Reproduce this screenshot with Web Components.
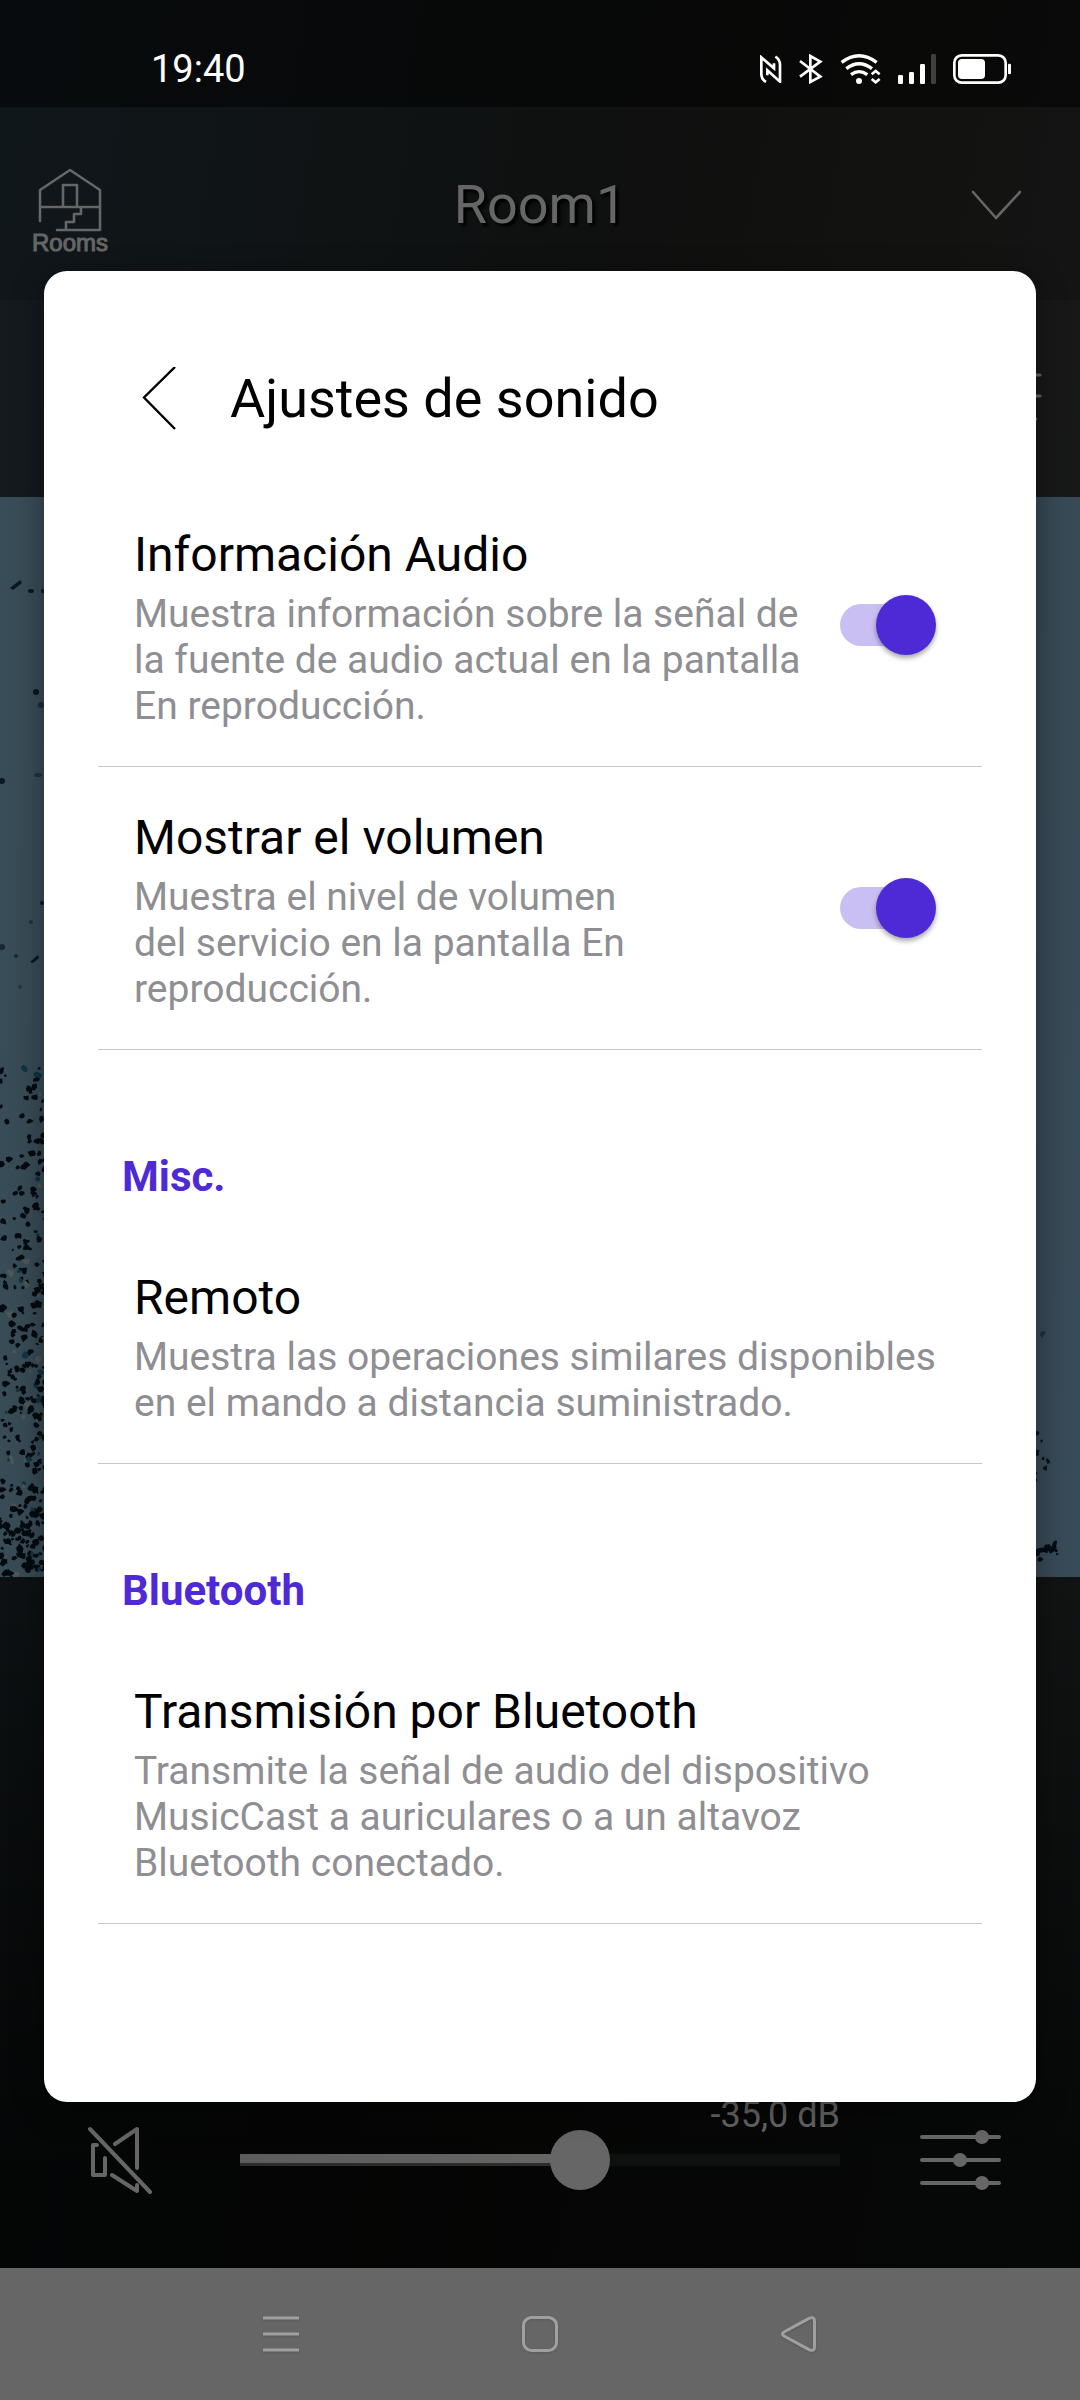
<!DOCTYPE html>
<html lang="es">
<head>
<meta charset="utf-8">
<meta name="viewport" content="width=device-width, initial-scale=1">
<title>Ajustes de sonido</title>
<style>
  body {
    margin: 0;
    background: #040506;
    font-family: Roboto, "Liberation Sans", sans-serif;
  }
</style>
</head>
<body>
<sound-settings-page></sound-settings-page>

<script>
customElements.define(
  "status-bar",
  class extends HTMLElement {
    constructor() {
      super();
      this.attachShadow({ mode: "open" }).innerHTML = `
        <style>
          :host {
            display: flex;
            align-items: center;
            justify-content: space-between;
            box-sizing: border-box;
            height: 107px;
            padding: 30px 69px 0 151px;
            background: rgba(0, 0, 0, 0.5);
            color: #fff;
            font-size: 38px;
          }
          .icons {
            display: flex;
            align-items: center;
            gap: 17px;
          }
          svg { display: block; fill: none; stroke: #fff; }
          .solid { fill: #fff; stroke: none; }
        </style>
        <time>19:40</time>
        <div class="icons">
          <svg width="22" height="28" viewBox="180 165 66 84" stroke-width="8">
            <path d="M198 246C188 240 184 235 184 222V172L222 205V190M226 170C236 176 240 182 240 194V245L202 211V226"/>
          </svg>
          <svg width="24" height="30" viewBox="297 162 72 90" stroke-width="8">
            <path d="M300 183L361 230L331 246V168L361 185L300 230"/>
          </svg>
          <svg width="41" height="31" viewBox="423 156 123 93">
            <path stroke-width="10" d="M428 184Q480 144 533 184M442 203Q480 173 519 203M456 221Q480 203 505 221"/>
            <circle class="solid" cx="480" cy="240" r="9"/>
            <path stroke-width="8" d="M518 220L530 210L542 220M518 234L530 244L542 234"/>
          </svg>
          <svg width="38" height="30" viewBox="591 159 114 90">
            <g class="solid">
              <rect x="591" y="222" width="15" height="27" rx="4"/>
              <rect x="624" y="213" width="15" height="36" rx="4"/>
              <rect x="657" y="189" width="15" height="60" rx="4"/>
              <rect x="690" y="159" width="15" height="90" rx="4" opacity="0.22"/>
            </g>
          </svg>
          <svg width="58" height="30" viewBox="759 159 174 90">
            <rect x="763" y="163" width="154" height="82" rx="22" stroke-width="8"/>
            <rect class="solid" x="774" y="174" width="81" height="60" rx="12"/>
            <rect class="solid" x="924" y="188" width="9" height="32" rx="4"/>
          </svg>
        </div>`;
    }
  }
);

customElements.define(
  "room-header",
  class extends HTMLElement {
    constructor() {
      super();
      this.attachShadow({ mode: "open" }).innerHTML = `
        <style>
          :host {
            display: grid;
            grid-template-columns: 1fr auto 1fr;
            align-items: center;
            box-sizing: border-box;
            height: 193px;
            padding: 2px 32px 0;
            color: #666;
          }
          button {
            padding: 0;
            border: 0;
            background: none;
            color: inherit;
          }
          h1 {
            margin: 0;
            font-size: 54px;
            font-weight: 400;
            line-height: 64px;
            text-shadow: 3px 3px 3px #000;
          }
          .rooms {
            justify-self: start;
            padding-top: 12px;
            font-family: "Liberation Sans", Arial, sans-serif;
            font-size: 24px;
            line-height: 20px;
            -webkit-text-stroke: 1px #666;
          }
          .more { justify-self: end; margin-right: 27px; }
          svg {
            display: block;
            margin: 0 auto;
            fill: none;
            stroke: currentColor;
            stroke-width: 2.6;
            stroke-linecap: round;
            stroke-linejoin: round;
          }
        </style>
        <button class="rooms">
          <svg width="64" height="65" viewBox="40 169 64 65">
            <path d="M42 222V191L72 171L102 191V231H59M42 208H102M65 208V186H79V208M83 208V215H76V223H68V231"/>
          </svg>
          Rooms
        </button>
        <h1><slot></slot></h1>
        <button class="more" aria-label="Cambiar de sala">
          <svg width="50" height="30" viewBox="0 0 50 30"><path d="M2 2L25 28L49 2"/></svg>
        </button>`;
    }
  }
);

customElements.define(
  "player-toolbar",
  class extends HTMLElement {
    constructor() {
      super();
      this.attachShadow({ mode: "open" }).innerHTML = `
        <style>
          :host {
            display: flex;
            align-items: center;
            justify-content: flex-end;
            box-sizing: border-box;
            height: 197px;
            padding: 0 38px;
            background: rgba(255, 255, 255, 0.02);
            color: #666;
          }
          button { padding: 0; border: 0; background: none; color: inherit; }
          svg { display: block; fill: none; stroke: currentColor; stroke-width: 3; stroke-linecap: round; }
        </style>
        <button aria-label="Lista">
          <svg width="64" height="56" viewBox="0 0 64 56"><path d="M2 4H62M2 25H62M2 48H58"/></svg>
        </button>`;
    }
  }
);

customElements.define(
  "cover-art",
  class extends HTMLElement {
    constructor() {
      super();
      this.attachShadow({ mode: "open" }).innerHTML = `
        <style>
          :host {
            display: block;
            background: linear-gradient(100deg, #394d58, #364852 50%, #384b58);
          }
          svg { display: block; width: 100%; }
        </style>
        <svg viewBox="0 0 1080 1080" aria-hidden="true">
          <g fill="#0b1820">
            <path d="M10 91L20 83L22 86L13 93Z"/>
            <ellipse cx="31" cy="94" rx="3" ry="2"/>
            <ellipse cx="43" cy="94" rx="2" ry="2"/>
            <ellipse cx="36" cy="195" rx="3" ry="3"/>
            <ellipse cx="41" cy="208" rx="3" ry="3" opacity="0.6"/>
            <ellipse cx="2" cy="284" rx="3" ry="3"/>
            <ellipse cx="38" cy="278" rx="4" ry="2" opacity="0.5"/>
            <ellipse cx="42" cy="406" rx="2" ry="2"/>
            <ellipse cx="31" cy="425" rx="2" ry="2" opacity="0.5"/>
            <ellipse cx="2" cy="450" rx="3" ry="3" opacity="0.7"/>
            <ellipse cx="16" cy="459" rx="2" ry="2" opacity="0.7"/>
            <path d="M30 465L38 458L39 461L33 466Z"/>
            <ellipse cx="20" cy="490" rx="2" ry="2" opacity="0.4"/>
          </g>
          <g id="specks"></g>
        </svg>`;
      this.shadowRoot.querySelector("#specks").innerHTML = this.specks();
    }

    // ink splatter, thicker towards the bottom edge
    specks() {
      let seed = 11;
      const rnd = () => (seed = (seed * 16807) % 2147483647) / 2147483647;
      let out = "";
      const blot = (x, y, r, fill) => {
        let d = "";
        for (let i = 0; i < 7; i++) {
          const a = (i / 7) * Math.PI * 2;
          const k = r * (0.55 + rnd() * 0.8);
          d += (i ? "L" : "M") + (x + Math.cos(a) * k).toFixed(1) + " " + (y + Math.sin(a) * k).toFixed(1);
        }
        out += `<path d="${d}Z" fill="${fill}"/>`;
      };
      for (let y = 566; y < 1080; y += 2) {
        const t = (y - 566) / 514;
        const count = 0.9 + t * t * 2.2;
        for (let n = rnd() * 2 * count; n > 0.4; n--) {
          const x = 60 * Math.pow(rnd(), 0.8);
          const tint = rnd();
          blot(x, y + rnd() * 3, 1.5 + rnd() * 2.3, tint > 0.94 ? "#4f5757" : tint > 0.88 ? "#10353f" : "#040b10");
        }
      }
      for (let i = 0; i < 12; i++) blot(1034 + rnd() * 14, 934 + rnd() * 50, 1 + rnd() * 2, "#08141b");
      for (let i = 0; i < 16; i++) blot(1034 + rnd() * 24, 1042 + rnd() * 22, 1.5 + rnd() * 2.5, "#050d12");
      blot(1043, 837, 3, "#22323c");
      return out;
    }
  }
);

customElements.define(
  "volume-controls",
  class extends HTMLElement {
    constructor() {
      super();
      this.attachShadow({ mode: "open" }).innerHTML = `
        <style>
          :host {
            display: flex;
            align-items: flex-end;
            gap: 80px;
            padding: 0 79px 78px 88px;
            color: #666;
          }
          button {
            display: flex;
            align-items: center;
            height: 60px;
            padding: 0;
            border: 0;
            background: none;
            color: inherit;
          }
          svg {
            fill: none;
            stroke: currentColor;
            stroke-width: 4;
            stroke-linecap: round;
            stroke-linejoin: round;
          }
          circle { fill: currentColor; stroke: none; }
          .volume {
            display: flex;
            flex: 1;
            flex-direction: column;
          }
          label {
            align-self: flex-end;
            font-size: 36px;
            line-height: 30px;
          }
          input {
            appearance: none;
            width: 100%;
            height: 60px;
            margin: 0;
            background: none;
          }
          input::-webkit-slider-runnable-track {
            height: 12px;
            background:
              linear-gradient(90deg, #5c5c5c, #666) left top / 56% 9px no-repeat,
              linear-gradient(90deg, #2c2c2c 56%, #0e0f0f 56%);
          }
          input::-webkit-slider-thumb {
            appearance: none;
            width: 60px;
            height: 60px;
            margin-top: -24px;
            border-radius: 50%;
            background: #666;
          }
        </style>
        <button aria-label="Silenciar">
          <svg width="72" height="68" viewBox="0 0 72 68">
            <path d="M2 3L62 66M9 19H5V49H17V32M27 18L49 3V42M24 49L49 65V59"/>
          </svg>
        </button>
        <div class="volume">
          <label for="level">-35,0 dB</label>
          <input id="level" type="range" min="-82" max="0" step="0.5" value="-35">
        </div>
        <button aria-label="Ecualizador">
          <svg width="81" height="60" viewBox="0 0 81 60">
            <path d="M2 7H79M2 30H79M2 53H79"/>
            <circle cx="62" cy="7" r="7"/>
            <circle cx="40" cy="30" r="7"/>
            <circle cx="62" cy="53" r="7"/>
          </svg>
        </button>`;
    }
  }
);

customElements.define(
  "nav-bar",
  class extends HTMLElement {
    constructor() {
      super();
      this.attachShadow({ mode: "open" }).innerHTML = `
        <style>
          :host {
            display: flex;
            justify-content: center;
            height: 132px;
            background: #666;
            color: #a0a0a0;
          }
          button {
            display: flex;
            align-items: center;
            justify-content: center;
            width: 24%;
            padding: 0;
            border: 0;
            background: none;
            color: inherit;
          }
          svg {
            fill: none;
            stroke: currentColor;
            stroke-width: 3;
            stroke-linejoin: round;
            filter: drop-shadow(0 1px 1px rgba(0, 0, 0, 0.15));
          }
        </style>
        <button aria-label="Recientes">
          <svg width="36" height="36" viewBox="0 0 36 36"><path d="M0 2H36M0 18H36M0 34H36"/></svg>
        </button>
        <button aria-label="Inicio">
          <svg width="36" height="36" viewBox="0 0 36 36"><rect x="1.5" y="1.5" width="33" height="33" rx="8"/></svg>
        </button>
        <button aria-label="Atrás">
          <svg width="36" height="36" viewBox="0 0 36 36">
            <path d="M3 16L28 2.4Q33.500 0 33.500 5V31Q33.500 36 28 33.600L3 20Q0 18 3 16Z"/>
          </svg>
        </button>`;
    }
  }
);

customElements.define(
  "settings-dialog",
  class extends HTMLElement {
    constructor() {
      super();
      this.attachShadow({ mode: "open" }).innerHTML = `
        <style>
          :host {
            display: block;
            padding-bottom: 178px;
            border-radius: 23px;
            background: #fff;
            color: #000;
            box-shadow: 0 8px 32px rgba(0, 0, 0, 0.4);
          }
          header {
            display: flex;
            align-items: center;
            gap: 54px;
            padding: 96px 54px 53px 98px;
          }
          button { padding: 0; border: 0; background: none; }
          svg { display: block; fill: none; stroke: #000; stroke-width: 2.4; }
          h2 {
            margin: 0;
            font-size: 54px;
            font-weight: 400;
            line-height: 64px;
          }
        </style>
        <header>
          <button aria-label="Volver">
            <svg width="34" height="64" viewBox="0 0 34 64"><path d="M33 0L2 30.500L33 62"/></svg>
          </button>
          <h2><slot name="title"></slot></h2>
        </header>
        <slot></slot>`;
    }
  }
);

customElements.define(
  "settings-section",
  class extends HTMLElement {
    constructor() {
      super();
      this.attachShadow({ mode: "open" }).innerHTML = `
        <style>
          :host { display: block; }
          h3 {
            margin: 0;
            padding: 102px 78px 26px;
            color: #4e2ad6;
            font-size: 42px;
            font-weight: 700;
            line-height: 49px;
          }
        </style>
        <h3>${this.getAttribute("heading")}</h3>
        <slot></slot>`;
    }
  }
);

const rowStyles = `
  :host { display: block; padding: 0 54px; }
  .row {
    display: flex;
    align-items: center;
    gap: 24px;
    box-sizing: border-box;
    width: 100%;
    padding: 43px 36px 37px;
    border: 0;
    border-bottom: 1px solid #c8c8cb;
    background: none;
    color: #000;
    font: inherit;
    text-align: left;
  }
  .text { display: flex; flex: 1; flex-direction: column; gap: 8px; }
  .name { font-size: 48px; line-height: 56px; }
  .info { color: #8e8e93; font-size: 39px; line-height: 46px; }`;

customElements.define(
  "switch-row",
  class extends HTMLElement {
    constructor() {
      super();
      this.attachShadow({ mode: "open" }).innerHTML = `
        <style>
          ${rowStyles}
          input {
            appearance: none;
            display: flex;
            align-items: center;
            justify-content: flex-end;
            flex: none;
            width: 80px;
            height: 42px;
            margin: 0 26px 6px 0;
            border-radius: 21px;
            background: #c9bff3;
          }
          input::before {
            content: "";
            flex: none;
            width: 60px;
            height: 60px;
            margin-right: -16px;
            border-radius: 50%;
            background: #4e2ad6;
            box-shadow: 0 3px 5px rgba(0, 0, 0, 0.35);
          }
        </style>
        <div class="row">
          <label class="text" for="switch">
            <span class="name"><slot name="name"></slot></span>
            <span class="info"><slot></slot></span>
          </label>
          <input id="switch" type="checkbox" role="switch" checked>
        </div>`;
    }
  }
);

customElements.define(
  "link-row",
  class extends HTMLElement {
    constructor() {
      super();
      this.attachShadow({ mode: "open" }).innerHTML = `
        <style>${rowStyles}</style>
        <button class="row">
          <span class="text">
            <span class="name"><slot name="name"></slot></span>
            <span class="info"><slot></slot></span>
          </span>
        </button>`;
    }
  }
);

customElements.define(
  "sound-settings-page",
  class extends HTMLElement {
    constructor() {
      super();
      this.attachShadow({ mode: "open" }).innerHTML = `
        <style>
          :host { display: grid; min-height: 100vh; }
          .player, settings-dialog { grid-area: 1 / 1; }
          .player {
            display: flex;
            flex-direction: column;
            background:
              linear-gradient(transparent 60%, rgba(0, 0, 0, 0.7) 90%),
              linear-gradient(100deg, #10171b, #0f100f 45%, #121210 60%, #151819);
          }
          volume-controls { flex: 1; }
          /* the dialog lies over the player */
          settings-dialog {
            position: relative;
            align-self: start;
            margin: 271px 44px 0;
          }
        </style>
        <div class="player">
          <status-bar></status-bar>
          <room-header>Room1</room-header>
          <player-toolbar></player-toolbar>
          <cover-art></cover-art>
          <volume-controls></volume-controls>
          <nav-bar></nav-bar>
        </div>
        <settings-dialog role="dialog">
          <span slot="title">Ajustes de sonido</span>
          <switch-row>
            <span slot="name">Información Audio</span>
            Muestra información sobre la señal de la fuente de audio actual en la pantalla En reproducción.
          </switch-row>
          <switch-row>
            <span slot="name">Mostrar el volumen</span>
            Muestra el nivel de volumen<br>del servicio en la pantalla En<br>reproducción.
          </switch-row>
          <settings-section heading="Misc.">
            <link-row>
              <span slot="name">Remoto</span>
              Muestra las operaciones similares disponibles en el mando a distancia suministrado.
            </link-row>
          </settings-section>
          <settings-section heading="Bluetooth">
            <link-row>
              <span slot="name">Transmisión por Bluetooth</span>
              Transmite la señal de audio del dispositivo MusicCast a auriculares o a un altavoz Bluetooth conectado.
            </link-row>
          </settings-section>
        </settings-dialog>`;
    }
  }
);
</script>
</body>
</html>
